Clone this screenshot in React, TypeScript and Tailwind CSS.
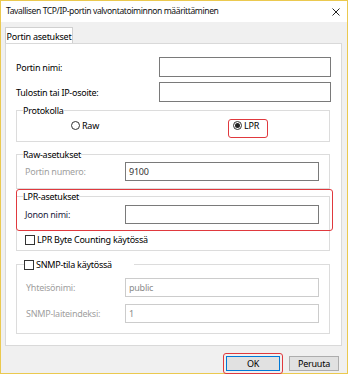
import React from "react";

const font = { fontFamily: '"Noto Sans", "DejaVu Sans", sans-serif' };

function Input({ value, disabled, className = "" }: { value?: string; disabled?: boolean; className?: string }) {
  return (
    <div
      className={`h-[19px] border bg-white flex items-center pl-[3px] ${
        disabled ? "border-[#cccccc] text-[#8c8c8c]" : "border-[#7a7a7a] text-[#333]"
      } ${className}`}
    >
      {value}
    </div>
  );
}

function Checkbox() {
  return <span className="inline-block w-[10px] h-[10px] border border-[#333] bg-white shrink-0" />;
}

export default function App() {
  return (
    <div
      className="w-[348px] h-[374px] border border-[#ebc94f] bg-[#f0f0f0] flex flex-col text-[9px] tracking-[-0.25px] text-black leading-[13px] whitespace-nowrap"
      style={font}
    >
      {/* title bar */}
      <div className="h-[21px] bg-white flex items-center justify-between pl-[5px] pr-[7px] shrink-0">
        <span className="text-[8.6px] tracking-[-0.42px] text-[#111]">Tavallisen TCP/IP-portin valvontatoiminnon määrittäminen</span>
        <svg width="8" height="8" viewBox="0 0 8 8">
          <path d="M0.5 0.5 L7.5 7.5 M7.5 0.5 L0.5 7.5" stroke="#222" strokeWidth="1" />
        </svg>
      </div>

      {/* body */}
      <div className="flex-1 flex flex-col px-[4px] pt-[4px]">
        {/* tab */}
        <div className="flex">
          <div className="h-[17px] w-[68px] bg-white border border-b-0 border-[#d0d0d0] flex items-center justify-center relative top-[1px]">
            Portin asetukset
          </div>
        </div>
        {/* panel */}
        <div className="h-[303px] w-[337px] bg-white border border-[#d9d9d9] pl-[10px] pt-[13px] relative">
          <div className="w-[315px] flex flex-col gap-[5px]">
            <div className="flex items-center justify-between">
              <span>Portin nimi:</span>
              <Input className="w-[172px] h-[20px]" />
            </div>
            <div className="flex items-center justify-between">
              <span>Tulostin tai IP-osoite:</span>
              <Input className="w-[172px] h-[20px]" />
            </div>
          </div>

          {/* Protokolla */}
          <fieldset className="w-[314px] border border-[#dcdcdc] mt-[2px] h-[38px]">
            <legend className="ml-[6px] leading-[13px]">Protokolla</legend>
            <div className="flex items-center h-[17px]">
              <span className="ml-[54px] w-[9px] h-[9px] rounded-full border border-[#333] bg-white" />
              <span className="ml-[2px]">Raw</span>
              <span className="ml-[134px] w-[9px] h-[9px] rounded-full border border-[#333] bg-white flex items-center justify-center">
                <span className="w-[5px] h-[5px] rounded-full bg-[#222]" />
              </span>
              <span className="ml-[2px]">LPR</span>
            </div>
          </fieldset>

          {/* Raw-asetukset */}
          <fieldset className="w-[314px] border border-[#dcdcdc] mt-[6px] h-[41px]">
            <legend className="ml-[6px] leading-[13px]">Raw-asetukset</legend>
            <div className="flex items-center pl-[8px] mt-[1px]">
              <span className="w-[100px] text-[#a0a0a0]">Portin numero:</span>
              <Input value="9100" className="w-[194px]" />
            </div>
          </fieldset>

          {/* LPR-asetukset */}
          <fieldset className="w-[314px] border border-[#dcdcdc] mt-[1px] h-[61px]">
            <legend className="ml-[6px] leading-[13px]">LPR-asetukset</legend>
            <div className="flex items-center pl-[8px] mt-[2px]">
              <span className="w-[100px] text-[#1a1a40]">Jonon nimi:</span>
              <Input className="w-[194px]" />
            </div>
            <div className="flex items-center gap-[2px] pl-[8px] mt-[9px]">
              <Checkbox />
              <span>LPR Byte Counting käytössä</span>
            </div>
          </fieldset>

          {/* SNMP */}
          <fieldset className="w-[314px] border border-[#dcdcdc] mt-[7px] h-[76px]">
            <legend className="ml-[7px] leading-[13px] flex items-center gap-[2px] pr-[22px]">
              <Checkbox />
              <span>SNMP-tila käytössä</span>
            </legend>
            <div className="flex items-center pl-[9px] mt-[7px]">
              <span className="w-[99px] text-[#a0a0a0]">Yhteisönimi:</span>
              <Input value="public" disabled className="w-[194px]" />
            </div>
            <div className="flex items-center pl-[9px] mt-[7px]">
              <span className="w-[99px] text-[#a0a0a0]">SNMP-laiteindeksi:</span>
              <Input value="1" disabled className="w-[194px]" />
            </div>
          </fieldset>

          {/* red annotations */}
          <div className="absolute left-[222px] top-[75px] w-[40px] h-[19px] border-[1.5px] border-[#e0393e] rounded-[3px]" />
          <div className="absolute left-[10px] top-[145px] w-[317px] h-[42px] border-[1.5px] border-[#e0393e] rounded-[3px]" />
        </div>

        {/* buttons */}
        <div className="flex justify-end items-center gap-[6px] pr-[4px] mt-[7px]">
          <div className="p-[2px] border-[1.5px] border-[#e0393e] rounded-[3px] -mr-[3px]">
            <div className="w-[54px] h-[15px] bg-[#e1e1e1] border border-[#0078d7] flex items-center justify-center">
              OK
            </div>
          </div>
          <div className="w-[50px] h-[15px] bg-[#e1e1e1] border border-[#adadad] flex items-center justify-center ml-[3px]">
            Peruuta
          </div>
        </div>
      </div>
    </div>
  );
}
